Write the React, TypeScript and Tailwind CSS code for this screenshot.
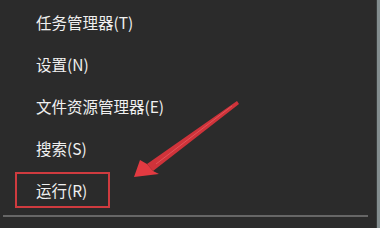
import React from 'react';

const items = [
  '任务管理器(T)',
  '设置(N)',
  '文件资源管理器(E)',
  '搜索(S)',
  '运行(R)',
];

function Arrow() {
  // hand-drawn red annotation arrow
  return (
    <svg className="absolute left-0 top-0 pointer-events-none" width="380" height="228" viewBox="0 0 380 228">
      <polygon points="237,101 239,104 153,171 147,164" fill="#d8343b" opacity="0.95" />
      <polygon points="134,177 140,160 147,164 153,171 159,174" fill="#e23a41" />
      <line x1="232" y1="106" x2="156" y2="164" stroke="#f06a6f" strokeWidth="1" opacity="0.6" />
    </svg>
  );
}

export default function App() {
  return (
    <div className="relative flex w-[380px] h-[228px] overflow-hidden bg-[#2b2b2b]" style={{ fontFamily: '"Noto Sans CJK SC", "Noto Sans", sans-serif' }}>
      <div className="flex flex-col w-[376px] pt-[2px]">
        {items.map((label, i) => (
          <div key={label} className="relative flex items-center h-[42px] pl-[36px] text-[15.5px] text-[#f0f0f0]">
            {label}
            {i === items.length - 1 && (
              <div className="absolute left-[15px] top-[2px] w-[95px] h-[36px] border-2 border-[#cf3b3f]" />
            )}
          </div>
        ))}
        <div className="mt-[3px] ml-[3px] w-[365px] h-[2px] bg-[#666666]" />
      </div>
      <div className="w-[1px] bg-[#3a3d3d]" />
      <div className="flex-1 bg-[#838d8f]" />
      <Arrow />
    </div>
  );
}
